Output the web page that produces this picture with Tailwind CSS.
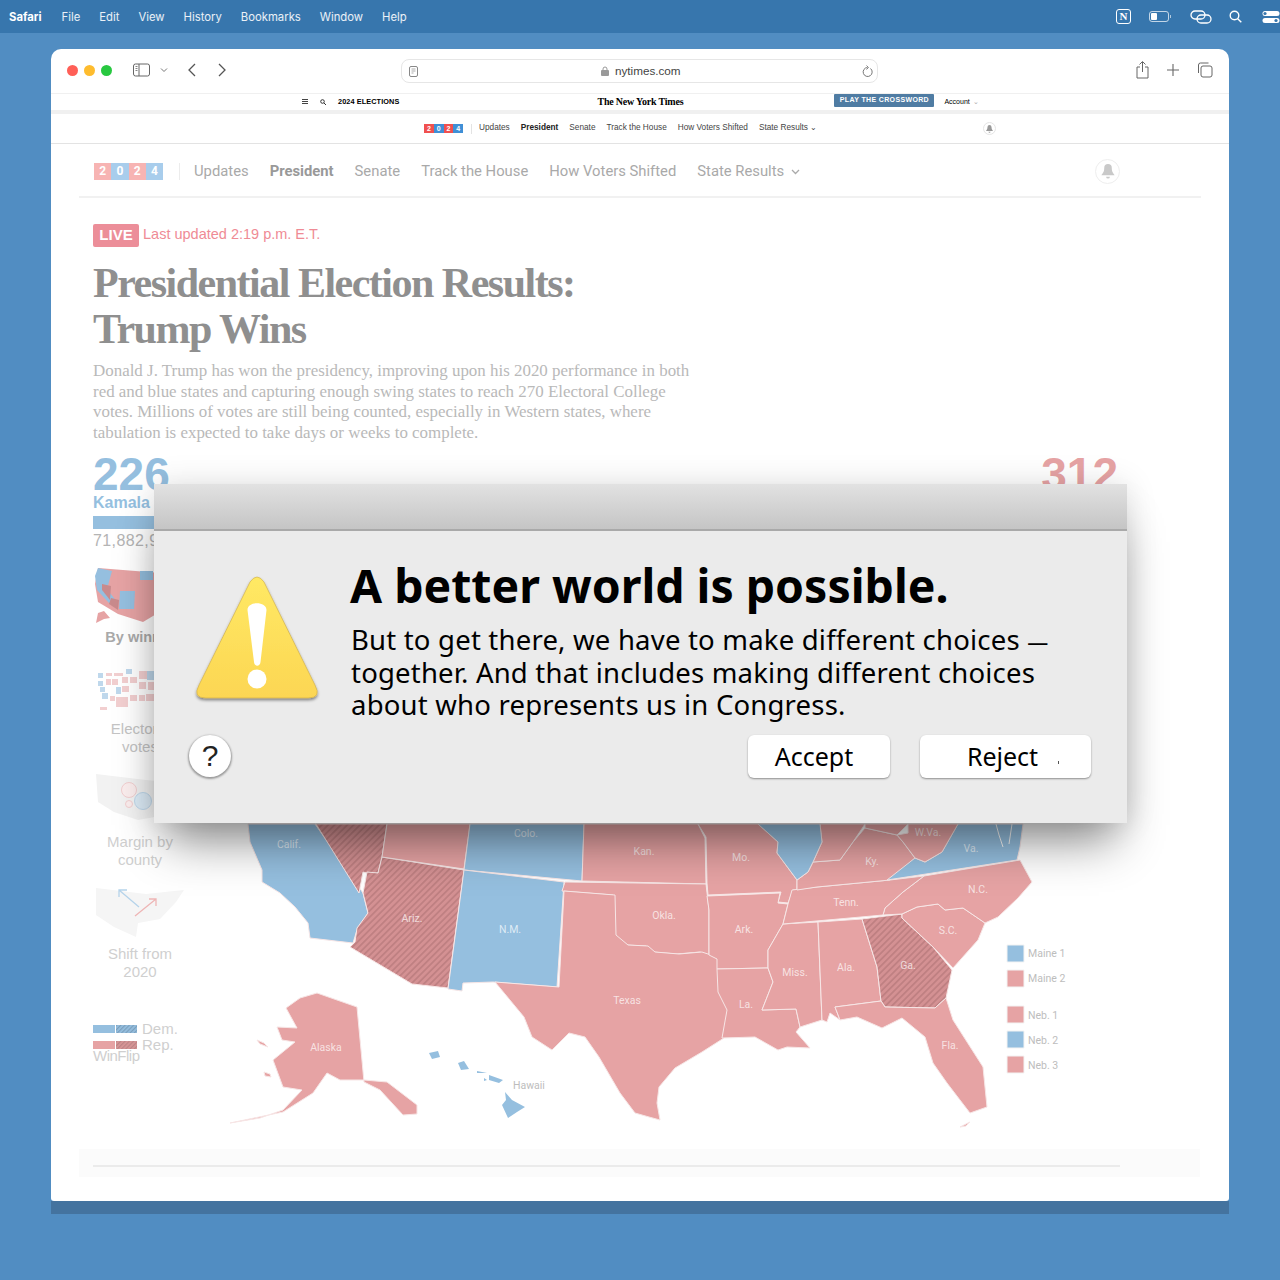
<!DOCTYPE html>
<html lang="en">
  <head>
    <meta charset="UTF-8" />
    <title>Presidential Election Results</title>
    <script src="https://cdn.jsdelivr.net/npm/@tailwindcss/browser@4"></script>
  </head>
  <body class="relative h-[1280px] w-[1280px] overflow-hidden bg-[#518dc2] font-['Liberation_Sans',sans-serif]">
    <!-- menu bar -->
    <header class="flex h-[33px] items-center justify-between bg-[#3776ad] pl-[9px] text-[12px] text-white/90">
      <nav class="flex gap-[19px] pt-px font-['Inter',sans-serif] text-[11.3px]">
        <b class="mr-px font-bold text-white">Safari</b>
        <span>File</span><span>Edit</span><span>View</span><span>History</span><span>Bookmarks</span><span>Window</span><span>Help</span>
      </nav>
      <div class="flex w-[165px] items-center overflow-hidden pl-[1px]">
        <span class="mr-[18px] flex size-[15px] shrink-0 items-center justify-center rounded-[3px] border-[1.5px] border-white font-['Liberation_Serif',serif] text-[11px] leading-none font-bold text-white">N</span>
        <svg class="mr-[18px] shrink-0" width="23" height="11" viewBox="0 0 23 11" fill="none"><rect x="0.500" y="0.500" width="19" height="10" rx="2.500" stroke="white" stroke-opacity=".7"/><rect x="2" y="2" width="6" height="7" rx="1" fill="white"/><path d="M21.500 4v3" stroke="white" stroke-opacity=".6"/></svg>
        <svg class="mr-[17px] shrink-0" width="22" height="14" viewBox="0 0 22 14" fill="none" stroke="white" stroke-width="1.300"><rect x="1" y="1" width="14" height="8" rx="4"/><rect x="7" y="5" width="14" height="8" rx="4"/></svg>
        <svg class="mr-[20px] shrink-0" width="13" height="13" viewBox="0 0 13 13" fill="none" stroke="white" stroke-width="1.400"><circle cx="5.500" cy="5.500" r="4.300"/><path d="M8.700 8.700l3.600 3.600"/></svg>
        <svg class="shrink-0" width="18" height="14" viewBox="0 0 18 14" fill="none"><rect x="0.500" y="1" width="17" height="5" rx="2.500" fill="white"/><rect x="0.500" y="8" width="17" height="5" rx="2.500" fill="white"/><circle cx="3" cy="3.500" r="1.600" fill="#3776ad"/><circle cx="14" cy="10.500" r="1.600" fill="#3776ad"/></svg>
      </div>
    </header>

    <!-- safari window -->
    <div class="mx-[51px] mt-[16px] h-[1152px] w-[1178px] rounded-t-[10px] rounded-b-[3px] bg-white">
      <div class="flex h-[44px] items-center pb-[2px]">
        <div class="ml-[16px] flex gap-[6px]">
          <i class="size-[11px] rounded-full bg-[#ff5f57]"></i>
          <i class="size-[11px] rounded-full bg-[#febc2e]"></i>
          <i class="size-[11px] rounded-full bg-[#28c840]"></i>
        </div>
        <svg class="ml-[21px]" width="17" height="14" viewBox="0 0 17 14" fill="none" stroke="#666"><rect x="0.500" y="1" width="16" height="12" rx="2"/><path d="M6 1v12" /><path d="M2.500 3.500h2M2.500 5.500h2M2.500 7.500h2" stroke-width=".8"/></svg>
        <svg class="ml-[10px]" width="8" height="6" viewBox="0 0 8 6" fill="none" stroke="#777"><path d="M1 1.500l3 3 3-3"/></svg>
        <svg class="ml-[19px]" width="9" height="14" viewBox="0 0 9 14" fill="none" stroke="#555" stroke-width="1.300"><path d="M8 1L2 7l6 6"/></svg>
        <svg class="ml-[22px]" width="9" height="14" viewBox="0 0 9 14" fill="none" stroke="#555" stroke-width="1.300"><path d="M1 1l6 6-6 6"/></svg>
        <div class="relative mt-[2px] ml-[174px] flex h-[24px] w-[477px] items-center rounded-[8px] border border-[#e6e6e6] bg-white">
          <svg class="ml-[7px]" width="9" height="11" viewBox="0 0 9 11" fill="none" stroke="#888"><rect x="0.500" y="0.500" width="8" height="10" rx="1.500"/><path d="M2.500 3h4M2.500 5h4M2.500 7h2" stroke-width=".7"/></svg>
          <svg class="ml-[183px]" width="8" height="10" viewBox="0 0 8 10" fill="#999"><rect y="4" width="8" height="6" rx="1"/><path d="M2 4V3a2 2 0 0 1 4 0v1" fill="none" stroke="#999"/></svg>
          <span class="ml-[6px] text-[11.700px] text-[#444]">nytimes.com</span>
          <svg class="ml-[181px]" width="11" height="13" viewBox="0 0 11 13" fill="none" stroke="#777"><path d="M8.500 3.500A4.500 4.500 0 1 1 5.500 2.500"/><path d="M4.500 0.500l2 2-2 2" stroke-width=".9"/></svg>
        </div>
        <svg class="ml-[258px]" width="13" height="18" viewBox="0 0 13 18" fill="none" stroke="#666"><path d="M4 6H1v11h11V6H9"/><path d="M6.500 11V1M3.500 3.500l3-3 3 3"/></svg>
        <svg class="ml-[18px]" width="12" height="12" viewBox="0 0 12 12" fill="none" stroke="#666" stroke-width="1.100"><path d="M6 0v12M0 6h12"/></svg>
        <svg class="ml-[18px]" width="16" height="16" viewBox="0 0 16 16" fill="none" stroke="#666"><rect x="4" y="4" width="11" height="11" rx="2"/><path d="M1.500 11V3a2 2 0 0 1 2-2h8"/></svg>
      </div>

      <!-- nyt top bar -->
      <div class="flex h-[21px] border-y-[1px] border-b-[4px] border-y-[#f0f0f0] text-[7px] text-black">
        <svg class="ml-[251px] mt-[5px]" width="6" height="5" viewBox="0 0 6 5" stroke="#444"><path d="M0 .5h6M0 2.500h6M0 4.500h6"/></svg>
        <svg class="ml-[12px] mt-[5px]" width="6" height="6" viewBox="0 0 6 6" fill="none" stroke="#333"><circle cx="2.500" cy="2.500" r="1.800"/><path d="M4 4l2 2"/></svg>
        <b class="ml-[12px] mt-[3px] text-[7.300px] tracking-[.1px]">2024 ELECTIONS</b>
        <b class="ml-[198px] mt-[1px] w-[84px] font-['Liberation_Serif',serif] text-[10px] leading-[14px] tracking-[-.2px] whitespace-nowrap">The New York Times</b>
        <b class="ml-[153px] h-[13px] w-[100px] rounded-[1px] bg-[#4f7ca3] text-center leading-[12px] tracking-[.35px] text-white">PLAY THE CROSSWORD</b>
        <span class="ml-[10px] mt-[3px]">Account</span>
        <span class="ml-[3px] mt-[3px] text-[#aaa]">⌄</span>
      </div>

      <!-- small election nav -->
      <div class="flex h-[30px] items-center border-b border-[#e3e3e3] text-[8.250px] text-[#444]">
        <div class="ml-[373px] flex h-[9px] w-[39px] text-center text-[7px] leading-[9px] font-bold text-white">
          <span class="flex-1 bg-[#f0504f]">2</span><span class="flex-1 bg-[#3f8fd6]">0</span><span class="flex-1 bg-[#f0504f]">2</span><span class="flex-1 bg-[#3f8fd6]">4</span>
        </div>
        <i class="ml-[8px] h-[10px] w-px bg-[#e3e3e3]"></i>
        <div class="ml-[7px] flex gap-[11px]">
          <span>Updates</span><b class="text-[#222]">President</b><span>Senate</span><span>Track the House</span><span>How Voters Shifted</span><span>State Results ⌄</span>
        </div>
        <span class="mr-[233px] ml-auto flex size-[13px] items-center justify-center rounded-full border border-[#e5e5e5]">
          <svg width="7" height="8" viewBox="0 0 14 16" fill="#999"><path d="M7 0a4 4 0 0 0-4 4c0 5-2 6-3 8h14c-1-2-3-3-3-8a4 4 0 0 0-4-4zM5 13.500a2 2 0 0 0 4 0z"/></svg>
        </span>
      </div>

      <!-- large election nav -->
      <div class="mx-[28px] flex h-[54px] items-center border-b-2 border-[#f1f1f1] pt-[3px] font-['Roboto',sans-serif] text-[14.800px] text-[#a9a9a9]">
        <div class="ml-[15px] flex h-[17px] w-[69px] text-center text-[12px] leading-[17px] font-bold text-white">
          <span class="flex-1 bg-[#f7b4b3]">2</span><span class="flex-1 bg-[#a8cdec]">0</span><span class="flex-1 bg-[#f7b4b3]">2</span><span class="flex-1 bg-[#a8cdec]">4</span>
        </div>
        <i class="ml-[16px] h-[17px] w-px bg-[#ececec]"></i>
        <div class="ml-[14px] flex items-center gap-[21px]">
          <span>Updates</span><b class="text-[#999]">President</b><span>Senate</span><span>Track the House</span><span>How Voters Shifted</span>
          <span class="flex items-center gap-[7px]">State Results
            <svg width="9" height="6" viewBox="0 0 9 6" fill="none" stroke="#aaa" stroke-width="1.300"><path d="M1 1l3.500 3.500L8 1"/></svg>
          </span>
        </div>
        <span class="mr-[81px] ml-auto flex size-[25px] items-center justify-center rounded-full border border-[#eeeeee]">
          <svg width="14" height="15" viewBox="0 0 14 16" fill="#c9c9c9"><path d="M7 0a4 4 0 0 0-4 4c0 5-2 6-3 8h14c-1-2-3-3-3-8a4 4 0 0 0-4-4zM5 13.500a2 2 0 0 0 4 0z"/></svg>
        </span>
      </div>

      <!-- article -->
      <main class="pl-[42px] pr-[109px]">
        <div class="mt-[25px] flex h-[24px] items-center">
          <b class="h-[23px] w-[46px] rounded-[2px] bg-[#ec8e99] text-center text-[15px] leading-[22px] text-white">LIVE</b>
          <span class="ml-[4px] text-[14.500px] text-[#ef8b95]">Last updated 2:19 p.m. E.T.</span>
        </div>
        <h1 class="mt-[13px] font-['Liberation_Serif',serif] text-[42px] leading-[46px] font-bold tracking-[-1.500px] text-[#8f8f8f]">Presidential Election Results:<br />Trump Wins</h1>
        <p class="mt-[9px] w-[620px] font-['Liberation_Serif',serif] text-[16.930px] leading-[20.700px] text-[#b9b9b9]">Donald J. Trump has won the presidency, improving upon his 2020 performance in both<br />red and blue states and capturing enough swing states to reach 270 Electoral College<br />votes. Millions of votes are still being counted, especially in Western states, where<br />tabulation is expected to take days or weeks to complete.</p>

        <div class="mt-[11px] flex justify-between text-[46px] leading-[38px] font-bold">
          <span class="text-[#95bfdf]">226</span>
          <span class="mr-[2px] text-[#e6a3a4]">312</span>
        </div>
        <b class="block text-[16px] leading-[20px] text-[#95bfdf]">Kamala</b>
        <div class="mt-[3px] h-[13px] w-[160px] bg-[#95bfdf]"></div>
        <p class="mt-[3px] text-[16px] leading-[18px] tracking-[.4px] text-[#b4b4b4]">71,882,9</p>

        <div class="mt-[14px] flex">
          <!-- map view switcher -->
          <aside class="flex w-[94px] shrink-0 flex-col items-center text-center text-[15px] leading-[18px] text-[#cfcfcf]">
            <svg class="mt-[4px]" width="94" height="56" viewBox="93 570 94 56">
              <path d="M98 570l75 6v30l-30 18-25-8-20-12-3-18z" fill="#e6a3a4"/>
              <path d="M98 570l14 3-5 18 10 13-8 1-12-13-2-14z" fill="#95bfdf"/>
              <path d="M120 593h15l-1 18h-15z" fill="#95bfdf"/>
              <path d="M140 573h13v9h-13z" fill="#95bfdf"/>
              <path d="M102 586l9 2-1 14-8-10z" fill="#c98a8c"/>
              <path d="M111 600l8 2-1 10-9-6z" fill="#c98a8c"/>
              <path d="M98 615l6-2 6 7-6 1-8 4z" fill="#e6a3a4"/>
            </svg>
            <b class="mt-[4px] text-[14.500px] text-[#aaa]">By winner</b>
            <svg class="mt-[21px]" width="94" height="50" viewBox="93 668 94 50">
              <g fill="#bfd8ec"><rect x="98" y="682" width="5" height="5"/><rect x="100" y="688" width="5" height="5"/><rect x="102" y="694" width="6" height="6"/><rect x="98" y="674" width="5" height="5"/><rect x="126" y="670" width="6" height="5"/><rect x="116" y="688" width="5" height="7"/></g>
              <g fill="#f2cfd0"><rect x="106" y="674" width="6" height="3"/><rect x="114" y="674" width="9" height="3"/><rect x="106" y="680" width="5" height="6"/><rect x="112" y="680" width="6" height="6"/><rect x="122" y="678" width="6" height="6"/><rect x="130" y="678" width="7" height="6"/><rect x="122" y="687" width="7" height="6"/><rect x="110" y="697" width="5" height="5"/><rect x="116" y="698" width="12" height="10"/><rect x="130" y="696" width="7" height="6"/><rect x="139" y="696" width="6" height="6"/><rect x="146" y="695" width="8" height="7"/><rect x="139" y="672" width="8" height="8"/><rect x="139" y="683" width="7" height="7"/><rect x="148" y="683" width="6" height="8"/></g>
              <rect x="147" y="672" width="7" height="9" fill="#bfd8ec"/>
              <rect x="100" y="708" width="7" height="3" fill="#f2cfd0"/>
            </svg>
            <span class="mt-[3px] w-full text-[#c4c4c4]">Electoral<br />votes</span>
            <svg class="mt-[16px]" width="94" height="54" viewBox="93 770 94 54">
              <path d="M96 772l50 6 32 3-6 16-12 17-22 4-24-8-16-10z" fill="#f2f2f2"/>
              <circle cx="129" cy="788" r="7.500" fill="#fbeeee" stroke="#f2cfd0"/>
              <circle cx="129" cy="802" r="3.500" fill="#fbeeee" stroke="#f2cfd0"/>
              <circle cx="143" cy="799" r="8.500" fill="#dcebf6" stroke="#bfd8ec"/>
            </svg>
            <span class="mt-[7px] w-full">Margin by<br />county</span>
            <svg class="mt-[17px]" width="94" height="58" viewBox="93 886 94 58">
              <path d="M96 888l50 6 38-4-8 12-16 17-22 4-2 14-22-10-18-12z" fill="#f5f5f5"/>
              <path d="M139 907l-20-17M119 897v-7h8" fill="none" stroke="#b5d3ea" stroke-width="1.300"/>
              <path d="M135 916l21-17M149 899h7v7" fill="none" stroke="#eeb5b5" stroke-width="1.300"/>
            </svg>
            <span class="mt-[1px] w-full">Shift from<br />2020</span>
            <div class="mt-[40px] w-full text-left text-[#cfcfcf]">
              <div class="flex h-[16px] items-center">
                <i class="h-[8px] w-[22px] bg-[#95bfdf]"></i>
                <svg class="ml-px" width="21" height="8"><defs><pattern id="hb" width="3" height="3" patternUnits="userSpaceOnUse" patternTransform="rotate(45)"><rect width="3" height="3" fill="#95bfdf"/><rect width="1.200" height="3" fill="#7a9fbc"/></pattern></defs><rect width="21" height="8" fill="url(#hb)"/></svg>
                <span class="ml-[5px]">Dem.</span>
              </div>
              <div class="flex h-[16px] items-center">
                <i class="h-[8px] w-[22px] bg-[#e6a3a4]"></i>
                <svg class="ml-px" width="21" height="8"><defs><pattern id="hr" width="3" height="3" patternUnits="userSpaceOnUse" patternTransform="rotate(45)"><rect width="3" height="3" fill="#d79596"/><rect width="1.200" height="3" fill="#bb8485"/></pattern></defs><rect width="21" height="8" fill="url(#hr)"/></svg>
                <span class="ml-[5px]">Rep.</span>
              </div>
              <span class="block leading-[6px] tracking-[-.5px]">WinFlip</span>
            </div>
          </aside>

          <!-- results map -->
          <svg class="shrink-0" width="933" height="606" viewBox="187 564 933 606" stroke="#f7e6e6" stroke-width="1" stroke-linejoin="round">
            <defs>
              <pattern id="hatch" width="4.500" height="4.500" patternUnits="userSpaceOnUse" patternTransform="rotate(45)" stroke="none"><rect width="4.500" height="4.500" fill="#d49193"/><rect width="1.800" height="4.500" fill="#bf8082"/></pattern>
            </defs>
            <g fill="#e6a3a4">
              <path fill="#95bfdf" d="M248 824l2 18 12 28v12l18 11 15 14 13 16 2 15 43 5 4-13 11-17-5-20-48-69z"/>
              <path fill="url(#hatch)" d="M316 824h71l-5 33-4 16h-11l-4-1-4 21z"/>
              <path fill="url(#hatch)" d="M382 857l82 13-16 118-36-4-62-37 5-5 2-14 11-15-5-20 4-21 11 1z"/>
              <path d="M387 824h83l-6 45-82-12z"/>
              <path fill="#95bfdf" d="M470 824h114l-2 57-118-11z"/>
              <path fill="#95bfdf" d="M464 870l100 12-7 105-64-5-30 1-1 8-14-2z"/>
              <path d="M584 824h114l7 14 1 46-124-3z"/>
              <path d="M565 882l141 2 3 26v45l-9-3-23 2-24-2-7-6-20-1-12-10-1-40-51-4z"/>
              <path d="M564 891l51 4 1 40 12 10 20 1 7 6 24 2 23-2 9 3 8 4v10l1 23 9 18-5 28-22 14-27 16-16 19-2 16 3 17-11-3-14-4-15-20-21-36-14-20-16-4-17 17-20-13-8-20-29-35 64 5z"/>
              <path d="M698 824h60l20 18-1 11 20 27v10h-4l-5 13-10-1 3-10-73 3-1-12-1-46z"/>
              <path d="M707 896l73-3-2 10 10 1-5 20-15 26v18l-51 1v-10l-8-4V910z"/>
              <path d="M717 969l51-1 5 14-11 28 34-1 4 18-4 5 14 16-23-1-9 3-23-13-33 1 5-28-9-18z"/>
              <path d="M783 924l35-2 4 98-22 7-4-18-34 1 11-28-5-14v-18z"/>
              <path d="M818 922l44-3 15 48 4 34-46 6 5 13-10-7-3 9-5-2z"/>
              <path fill="url(#hatch)" d="M862 919l40-5v4l31 29 19 23-6 28-11 10-50-1-4-6-4-34z"/>
              <path d="M835 1007l46-6 4 6 50 1 11-10 7 22 30 47 4 40-17 6-10-13-13-17-14-20-8-26-23-19-20 10-25-11-17 3z"/>
              <path d="M960 1127l10-5-4 4z"/>
              <path d="M902 914l15-7 21-3 7 6 18-2 22 15-7 17-25 28-20-21-31-29z"/>
              <path d="M924 876l96-16 12 22-14 16-20 19-13 6-22-15-18 2-7-6-21 3-15 7-19 1 2-7 18-16z"/>
              <path d="M792 890l25-3 73-7 34-4-21 16-18 16-2 7-100 9 5-20z"/>
              <path d="M813 862l27-2 13-18 12-14 32 7 6 7 12 16-25 22-73 7-20 3v-10l11-8z"/>
              <path fill="#95bfdf" d="M915 858l10 4 17-10 16-28h65l-3 23-3 13-130 20z"/>
              <path d="M908 824h50l-16 28-17 10-10-4-12-16-6-7 11-2z"/>
              <path d="M820 824h45l-12 18-13 18-27 2 9-20z"/>
              <path d="M865 824h43l-11 11-32-7z"/>
              <path fill="#95bfdf" d="M758 824h62l2 18-9 20-5 10-11 8-20-27 1-11z"/>
              <path fill="none" stroke="#fff" d="M1003 847l-4-12-3-11M1012 824l-3 20"/>
              <path d="M357 1007L317 993 300 998 286 1008 297 1028 277 1027 282 1040 295 1042 273 1060 283 1087 302 1090 283 1110 260 1118 230 1123 283 1112 313 1093 327 1073 340 1080 364 1080 387 1082 417 1105V1114L403 1115 380 1090 364 1082Z"/>
              <path d="M257 1040l7 3 4 4-8-3z"/>
              <path d="M264 1072l6 2 1 3-6-1z"/>
              <path fill="#95bfdf" stroke="none" d="M505 1092L512 1100 525 1107 517 1112 508 1118 502 1105 506 1100Z"/>
              <path fill="#95bfdf" stroke="none" d="M429 1053l9-2 2 6-8 2z"/>
              <path fill="#95bfdf" stroke="none" d="M458 1063l6-2 5 8-8 1z"/>
              <path fill="#95bfdf" stroke="none" d="M477 1071l10 2-10 0zM489 1075l14 5-4 3-10-3zM484 1078l3 2-3 1z"/>
            </g>
            <g stroke="none" fill="#ffffff" fill-opacity=".7" font-size="10.500" font-family="Roboto, sans-serif" text-anchor="middle">
              <text x="289" y="848">Calif.</text><text x="412" y="922">Ariz.</text><text x="526" y="837">Colo.</text><text x="510" y="933">N.M.</text>
              <text x="644" y="855">Kan.</text><text x="664" y="919">Okla.</text><text x="627" y="1004">Texas</text><text x="326" y="1051">Alaska</text>
              <text x="741" y="861">Mo.</text><text x="744" y="933">Ark.</text><text x="746" y="1008">La.</text><text x="795" y="976">Miss.</text>
              <text x="846" y="971">Ala.</text><text x="908" y="969">Ga.</text><text x="950" y="1049">Fla.</text><text x="948" y="934">S.C.</text>
              <text x="978" y="893">N.C.</text><text x="846" y="906">Tenn.</text><text x="872" y="865">Ky.</text><text x="928" y="836">W.Va.</text><text x="971" y="852">Va.</text>
            </g>
            <g stroke="none" fill="#bdbdbd" font-size="10.500" font-family="Roboto, sans-serif">
              <text x="513" y="1089">Hawaii</text>
              <text x="1028" y="957">Maine 1</text><text x="1028" y="982">Maine 2</text><text x="1028" y="1019">Neb. 1</text><text x="1028" y="1044">Neb. 2</text><text x="1028" y="1069">Neb. 3</text>
            </g>
            <g stroke="#f3f3f3">
              <rect x="1007" y="945" width="17" height="17" fill="#95bfdf"/><rect x="1007" y="970" width="17" height="17" fill="#e6a3a4"/>
              <rect x="1007" y="1006" width="17" height="17" fill="#e6a3a4"/><rect x="1007" y="1031" width="17" height="17" fill="#95bfdf"/><rect x="1007" y="1056" width="17" height="17" fill="#e6a3a4"/>
            </g>
          </svg>
        </div>
      </main>
    </div>

    <!-- window's lower band -->
    <div class="mx-[51px] h-[13px] w-[1178px] bg-[#44739f]"></div>

    <!-- faded strip and rule at the bottom of the article -->
    <div class="absolute top-[1149px] left-[79px] flex h-[28px] w-[1121px] items-start bg-[#fbfbfb] pt-[16px] pl-[14px]">
      <i class="h-[2px] w-[1027px] bg-[#ebebeb]"></i>
    </div>

    <!-- alert dialog -->
    <section class="absolute top-[484px] left-[154px] h-[339px] w-[973px] bg-[#ebebeb] shadow-[0_30px_45px_-12px_rgba(0,0,0,0.45),0_0_30px_rgba(0,0,0,0.12)]">
      <div class="h-[47px] border-b-2 border-[#a9a9a9] bg-gradient-to-b from-[#e2e2e2] to-[#c5c5c5]"></div>
      <div class="flex">
        <div class="w-[196px] shrink-0 pt-[44px] pl-[34px]">
          <svg width="138" height="134" viewBox="0 0 138 134">
            <defs>
              <linearGradient id="warn" x1="0" y1="0" x2="0" y2="1"><stop offset="0" stop-color="#ffe964"/><stop offset="1" stop-color="#fcd653"/></linearGradient>
              <filter id="warnShadow" x="-10%" y="-10%" width="120%" height="125%"><feDropShadow dx="0" dy="2" stdDeviation="1.500" flood-color="#000" flood-opacity=".45"/></filter>
            </defs>
            <path d="M62 7Q69 -3 76 7L127 110Q134 123 120 123H18Q4 123 11 110Z" fill="url(#warn)" stroke="#c9a94a" stroke-width=".6" filter="url(#warnShadow)"/>
            <path d="M59.500 35c0-9 19-9 19 0l-6 52c-.5 5-6 5-6.500 0z" fill="#fff"/>
            <circle cx="69" cy="104" r="9.500" fill="#fff"/>
          </svg>
          <div class="mt-[26px] ml-[1px] flex size-[42px] items-center justify-center rounded-full bg-white text-[30px] leading-none font-medium text-[#222] shadow-[0_1px_2px_1px_rgba(0,0,0,0.35)]">?</div>
        </div>
        <div class="font-['Noto_Sans',sans-serif] text-black">
          <h2 class="mt-[22px] text-[46.400px] leading-[64px] font-bold whitespace-nowrap">A better world is possible.</h2>
          <p class="mt-[7px] h-[98px] pl-px text-[27.500px] leading-[32.500px] tracking-[.2px] whitespace-nowrap">But to get there, we have to make different choices <span class="text-[21px] leading-none">—</span><br />together. And that includes making different choices<br />about who represents us in Congress.</p>
          <div class="mt-[13px] ml-[398px] flex gap-[30px] text-[25px]">
            <span class="flex h-[43px] w-[142px] items-center justify-center rounded-[6px] bg-white pr-[10px] shadow-[0_1px_2px_rgba(0,0,0,0.4)]">Accept</span>
            <span class="relative flex h-[43px] w-[171px] items-center justify-center rounded-[6px] bg-white pr-[6px] shadow-[0_1px_2px_rgba(0,0,0,0.4)]">Reject<i class="absolute top-[26px] right-[32px] h-[3px] w-px bg-[#555]"></i></span>
          </div>
        </div>
      </div>
    </section>
  </body>
</html>
